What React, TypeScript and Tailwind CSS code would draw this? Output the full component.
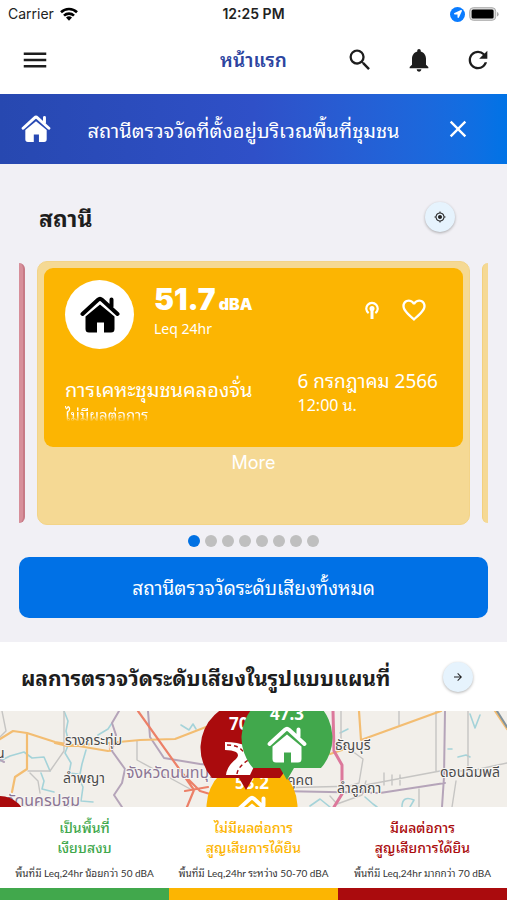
import type { ReactNode } from "react";
import { FaLocationArrow } from "react-icons/fa";
import {
  MdArrowForward,
  MdClose,
  MdFavoriteBorder,
  MdMenu,
  MdMyLocation,
  MdNotifications,
  MdRefresh,
  MdSearch,
} from "react-icons/md";

function HouseShape() {
  return (
    <>
      <path
        d="M5.5 20.500L20 8.500l14.500 12V33a3.500 3.500 0 0 1-3.500 3.500h-7V26.500h-7v10H9A3.500 3.500 0 0 1 5.500 33z"
        fill="currentColor"
      />
      <path
        d="M2.500 18L18 3.800q2-1.800 4 0L37.500 18M31.500 3.500v7"
        fill="none"
        stroke="currentColor"
        strokeWidth="4"
        strokeLinecap="round"
        strokeLinejoin="round"
      />
    </>
  );
}

function House({ className }: { className: string }) {
  return (
    <svg viewBox="0 0 40 38" className={className} aria-hidden="true">
      <HouseShape />
    </svg>
  );
}

function StatusBar() {
  return (
    <div className="grid h-7 grid-cols-3 items-center px-2 font-['Inter',sans-serif] text-sm text-[#222]">
      <div className="flex items-center gap-1.5">
        <span>Carrier</span>
        <svg viewBox="0 0 18 14" className="h-3.5 w-[18px]" aria-hidden="true">
          <g fill="none" stroke="#000" strokeWidth="2.6">
            <path d="M1 5.2a11.5 11.5 0 0 1 16 0" />
            <path d="M4 8.6a7.2 7.2 0 0 1 10 0" />
          </g>
          <path d="M6 10.6a4.4 4.4 0 0 1 6 0L9 13.8z" />
        </svg>
      </div>
      <span className="text-center font-semibold">12:25 PM</span>
      <div className="flex items-center justify-end gap-1">
        <span className="flex size-[15px] items-center justify-center rounded-full bg-[#0a7cff] text-white">
          <FaLocationArrow className="size-2" />
        </span>
        <svg viewBox="0 0 30 14" className="h-3.5 w-[30px]" aria-hidden="true">
          <rect x="0.7" y="0.7" width="26" height="12.6" rx="3.6" fill="#ddd" stroke="#aaa" />
          <rect x="2.6" y="2.6" width="22" height="8.8" rx="1.5" />
          <path d="M28 5a2.3 2.3 0 0 1 0 4.4z" fill="#aaa" />
        </svg>
      </div>
    </div>
  );
}

function Header() {
  return (
    <header className="grid h-[66px] grid-cols-[1fr_auto_1fr] items-center px-[15px] pb-[3px] text-[#1d1d1d]">
      <button aria-label="เมนู" className="flex size-10 items-center justify-center">
        <MdMenu className="size-[30px]" />
      </button>
      <h1 className="text-[19px] font-semibold text-[#2c449f]">หน้าแรก</h1>
      <div className="flex justify-end gap-[31px]">
        <button aria-label="ค้นหา">
          <MdSearch className="size-7" />
        </button>
        <button aria-label="การแจ้งเตือน">
          <MdNotifications className="size-7" />
        </button>
        <button aria-label="รีเฟรช">
          <MdRefresh className="size-7" />
        </button>
      </div>
    </header>
  );
}

function Banner() {
  return (
    <div className="flex h-[70px] items-center bg-linear-to-r from-[#2748b0] via-[#2f50c8] via-50% to-[#0073e6] pr-[35px] pl-[21px] text-white">
      <House className="h-7 w-[30px]" />
      <p className="flex-1 pr-2 text-center text-[20px] whitespace-nowrap">
        สถานีตรวจวัดที่ตั้งอยู่บริเวณพื้นที่ชุมชน
      </p>
      <button aria-label="ปิด">
        <MdClose className="size-7" />
      </button>
    </div>
  );
}

function RoundButton({ label, children }: { label: string; children: ReactNode }) {
  return (
    <button
      aria-label={label}
      className="flex size-[30px] shrink-0 items-center justify-center rounded-full bg-[#e6f3fd] text-[#222] shadow-[0_1px_3px_rgba(0,0,0,0.3)]"
    >
      {children}
    </button>
  );
}

function StationCard() {
  return (
    <article className="min-w-0 flex-1 rounded-[10px] border border-[#f3d488] bg-[#f5d994] p-1.5 text-white">
      <div className="h-[179px] rounded-[9px] bg-[#fcb502] px-[21px] pt-3">
        <div className="flex h-[70px] items-start">
          <div className="flex size-[69px] shrink-0 items-center justify-center rounded-full bg-white text-black">
            <House className="h-[38px] w-10" />
          </div>
          <div className="ml-5 pt-[3px]">
            <p className="font-['Inter',sans-serif] leading-8 font-black">
              <span className="text-[30px]">51.7</span> <span className="text-base">dBA</span>
            </p>
            <p className="-mt-0.5 text-sm leading-5">Leq 24hr</p>
          </div>
          <div className="mr-3.5 ml-auto flex items-center gap-[21px] pt-4">
            <svg viewBox="0 0 14 18" className="h-[18px] w-3.5" fill="none" stroke="currentColor" aria-hidden="true">
              <path d="M3.6 12.2a5.7 5.7 0 1 1 6.8 0" strokeWidth="2.2" />
              <circle cx="7" cy="7.5" r="2.5" fill="currentColor" stroke="none" />
              <path d="M7 7.5V18" strokeWidth="3" />
            </svg>
            <button aria-label="เพิ่มในรายการโปรด">
              <MdFavoriteBorder className="size-7" />
            </button>
          </div>
        </div>
        <div className="mt-3.5 flex justify-between">
          <div className="pt-2">
            <h3 className="text-[20px] leading-8">การเคหะชุมชนคลองจั่น</h3>
            <p className="h-[18px] overflow-hidden mask-b-from-60% text-[15px] leading-5">ไม่มีผลต่อการ</p>
          </div>
          <div className="pr-1">
            <p className="text-[19px] leading-8">6 กรกฎาคม 2566</p>
            <p className="text-base leading-4">12:00 น.</p>
          </div>
        </div>
      </div>
      <button className="block h-[71px] w-full pb-10 font-['Inter',sans-serif] text-lg leading-7">More</button>
    </article>
  );
}

function Stations() {
  return (
    <section className="bg-[#f1f0f5] px-[19px] pb-6">
      <div className="flex h-[97px] items-center justify-between pt-[9px] pr-[33px] pl-5">
        <h2 className="text-[23px] font-bold text-[#1d1d1d]">สถานี</h2>
        <RoundButton label="ตำแหน่งของฉัน">
          <MdMyLocation className="size-3" />
        </RoundButton>
      </div>
      <div className="flex gap-3">
        <div className="my-0.5 w-1.5 rounded-r-md border-r-2 border-[#c77a86] bg-[#d78f9a]" />
        <StationCard />
        <div className="my-0.5 w-1.5 rounded-l-md border-l border-[#f3d07d] bg-[#f5d994]" />
      </div>
      <div className="flex justify-center gap-[5px] py-2.5">
        <span className="size-3 rounded-full bg-[#0071e3]" />
        {[2, 3, 4, 5, 6, 7, 8].map((dot) => (
          <span key={dot} className="size-3 rounded-full bg-[#bfbfbf]" />
        ))}
      </div>
      <button className="h-[61px] w-full rounded-[10px] bg-[#0071e6] text-[19px] text-white">
        สถานีตรวจวัดระดับเสียงทั้งหมด
      </button>
    </section>
  );
}

/* A cut-off disc with a pointer under it; x, y is the disc's centre. */
function Marker({ x, y, color, value, children }: { x: number; y: number; color: string; value: string; children: ReactNode }) {
  return (
    <g transform={`translate(${x} ${y})`}>
      <path d="M-34 30A45.5 45.5 0 1 1 34 30H7L0 42L-7 30z" fill={color} />
      <text
        y="-18"
        textAnchor="middle"
        fill="#fff"
        fontSize="17"
        fontWeight="700"
        className="font-['Noto_Sans',sans-serif]"
      >
        {value}
      </text>
      {children}
    </g>
  );
}

function NoiseMap() {
  return (
    <svg
      viewBox="0 0 507 96"
      preserveAspectRatio="xMidYMid slice"
      className="block h-24 w-full bg-[#f2efea]"
      role="img"
      aria-label="แผนที่ระดับเสียง"
    >
      <g fill="none" strokeLinejoin="round" strokeLinecap="round">
        <g stroke="#a5d3d9" strokeWidth="1.6">
          <path d="M64 0l4 10-2 10 3 12-4 10 6 10-2 10 9 1M0 50l10-5 14-4 8 6 12-1 6 14M86 39l-4 14-3 15 4 8-2 14 12 1M41 62l3 8-2 8 12 3M98 24l10-6 4-6M181 14l8 5 4-6 3 5M340 22l8-4M470 3l5 14 5-13M448 38h4M458 46l8-2 4 2M365 86l8 7 4 3M402 96q0-12 12-7l-4 7M310 95l10-7 10 8" />
        </g>
        <g stroke="#c6c5c3" strokeWidth="1.4">
          <path d="M64 0v40l-14 20H28M2 0l4 20-6 6M137 30v19l55 30M30 62l8 8 2 12M399 0v14M341 0v32l22 16-4 24-19 6M468 0v60M436 0v60M456 70l-4 26M384 62v12M392 64v10M400 64v10M270 77l90-2 80-15h30l37-8M330 85l7 8 25-9 4-14M419 78v18" />
        </g>
        <g stroke="#b5a4b9" strokeWidth="2">
          <path d="M119 0l-7 12 4 12-4 16 13 18-3 14-8 12 8 12M148 0l2 26 14 21 36 6 20 2M445 0l-1 66-2 30M278 80l102 2 65-10M0 49l4 2" />
        </g>
        <g stroke="#f3bd72" strokeWidth="2.2">
          <path d="M0 28l13-8 14 2 28 9 53 9M55 32l12 3 41-3 32-3 35-1 31-12M27 23v35l-12 8-3 15M110 33v7M359 0l2 29 80-29M330 43l12-4M495 0l12 18" />
        </g>
        <g stroke="#ec8068" strokeWidth="2.2">
          <path d="M138 0l42 59 14 20-7 17M180 60l20 20 10 3M185 80l23-4" />
        </g>
        <path d="M333 0l1 40 8 14v29l-8 13" stroke="#dc789b" strokeWidth="3" />
        <path d="M497 0l10 16" stroke="#83929b" strokeWidth="2" />
      </g>
      <g
        className="font-['Noto_Sans_Thai','Noto_Sans',sans-serif]"
        fill="#4a4a4a"
        fontSize="14"
        stroke="#f7f5f2"
        strokeWidth="2"
        paintOrder="stroke"
      >
        <text x="65" y="34">รางกระทุ่ม</text>
        <text x="63" y="72">ลำพญา</text>
        <text x="-4" y="47">น</text>
        <text x="335" y="39">ธัญบุรี</text>
        <text x="287" y="74">คูคต</text>
        <text x="337" y="82">ลำลูกกา</text>
        <text x="440" y="66">ดอนฉิมพลี</text>
        <g fontSize="16" fill="#8c7695">
          <text x="126" y="67">จังหวัดนนทบุรี</text>
          <text x="80" y="95" textAnchor="end">จังหวัดนครปฐม</text>
        </g>
      </g>
      <circle cx="0" cy="111" r="26" fill="#aa0b0d" />
      <Marker x={252} y={96} color="#fcb502" value="53.2">
        <g transform="translate(-20 -12)" color="#fff">
          <HouseShape />
        </g>
      </Marker>
      <Marker x={246} y={37} color="#aa0b0d" value="70.5">
        <path d="M-21-6Q-8-6 0-2Q12 4 12 10L4 27H-20Q-19 18-10 11Q-6 7-10 4Q-14 2-21 2z" fill="#fff" />
        <path
          d="M-19-3Q-6-3-2 5M-9 26Q-8 18 4 11"
          fill="none"
          stroke="#aa0b0d"
          strokeWidth="1.4"
          strokeDasharray="4 3"
        />
      </Marker>
      <Marker x={287} y={27} color="#41a84c" value="47.3">
        <g transform="translate(-20 -12)" color="#fff">
          <HouseShape />
        </g>
      </Marker>
    </svg>
  );
}

const levels = [
  {
    lines: ["เป็นพื้นที่", "เงียบสงบ"],
    range: "พื้นที่มี Leq,24hr น้อยกว่า 50 dBA",
    text: "text-[#41a84c]",
    bar: "bg-[#41a84c]",
  },
  {
    lines: ["ไม่มีผลต่อการ", "สูญเสียการได้ยิน"],
    range: "พื้นที่มี Leq,24hr ระหว่าง 50-70 dBA",
    text: "text-[#fcb502]",
    bar: "bg-[#fcb502]",
  },
  {
    lines: ["มีผลต่อการ", "สูญเสียการได้ยิน"],
    range: "พื้นที่มี Leq,24hr มากกว่า 70 dBA",
    text: "text-[#aa0b0d]",
    bar: "bg-[#aa0b0d]",
  },
];

function Legend() {
  return (
    <ul className="grid grid-cols-3">
      {levels.map((level) => (
        <li key={level.range} className="text-center">
          <div className="h-[81px] pt-2.5 whitespace-nowrap">
            {level.lines.map((line) => (
              <p key={line} className={`text-sm leading-5 font-medium ${level.text}`}>
                {line}
              </p>
            ))}
            <p className="mt-2 font-[Lato,'Noto_Sans_Thai_Looped','Noto_Sans_Thai',sans-serif] text-[10px] leading-4 text-[#333]">
              {level.range}
            </p>
          </div>
          <div className={`h-3 ${level.bar}`} />
        </li>
      ))}
    </ul>
  );
}

export default function App() {
  return (
    <main className="bg-white font-['Noto_Sans_Thai_Looped','Noto_Sans_Thai','Noto_Sans',sans-serif]">
      <StatusBar />
      <Header />
      <Banner />
      <Stations />
      <section>
        <div className="flex h-[69px] items-center justify-between pr-[34px] pl-[21px]">
          <h2 className="text-[21px] font-bold whitespace-nowrap text-[#1d1d1d]">
            ผลการตรวจวัดระดับเสียงในรูปแบบแผนที่
          </h2>
          <RoundButton label="เปิดแผนที่">
            <MdArrowForward className="size-3" />
          </RoundButton>
        </div>
        <NoiseMap />
        <Legend />
      </section>
    </main>
  );
}
